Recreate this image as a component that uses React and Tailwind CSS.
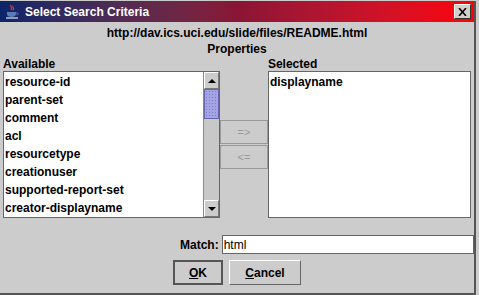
import React from "react";

const available = [
    "resource-id",
    "parent-set",
    "comment",
    "acl",
    "resourcetype",
    "creationuser",
    "supported-report-set",
    "creator-displayname",
];

const font = { fontFamily: '"Liberation Sans", Arial, sans-serif' };

const JavaCup = () => (
    <svg width="16" height="16" viewBox="0 0 16 16">
        <path d="M7 1c-1 2 2 3 0 5M9 2c-1 2 2 2 0 4" stroke="#e04020" strokeWidth="1.2" fill="none" />
        <path d="M3 8h9v2c0 2-2 3-4.5 3S3 12 3 10z" fill="#5a7ab8" />
        <path d="M12 9h1.5c1 0 1 2-1 2" stroke="#5a7ab8" strokeWidth="1" fill="none" />
        <path d="M2 14h12" stroke="#e8e8e8" strokeWidth="1.2" />
    </svg>
);

const ScrollBar = () => (
    <div className="flex w-[16px] flex-col border-l border-[#888] bg-[#c8c8c8]">
        <div className="flex h-[17px] items-center justify-center border border-t-white border-l-white border-r-[#777] border-b-[#777] bg-[#cccccc]">
            <div className="h-0 w-0 border-x-[4px] border-b-[4px] border-x-transparent border-b-black" />
        </div>
        <div className="h-[30px] border border-[#6666aa] bg-[#a4a4e4] bg-[radial-gradient(#7c7cc8_1px,transparent_1px)] bg-[length:3px_3px]" />
        <div className="flex-1" />
        <div className="flex h-[17px] items-center justify-center border border-t-white border-l-white border-r-[#777] border-b-[#777] bg-[#cccccc]">
            <div className="h-0 w-0 border-x-[4px] border-t-[4px] border-x-transparent border-t-black" />
        </div>
    </div>
);

export default function App() {
    return (
        <div className="h-[295px] w-[479px] overflow-hidden bg-[#cccccc] pt-[1px]" style={font}>
            <div className="flex h-[294px] w-[476px] flex-col border-r-2 border-b-2 border-r-[#555] border-b-[#555]">
                {/* Title bar */}
                <div className="flex h-[21px] items-center bg-gradient-to-r from-[#0a246a] via-[#8a1535] to-[#ff0000] pl-[4px] pr-[3px]">
                    <JavaCup />
                    <span className="ml-[5px] text-[12px] font-bold text-white">Select Search Criteria</span>
                    <div className="ml-auto flex h-[15px] w-[17px] items-center justify-center border border-t-white border-l-white border-r-[#333] border-b-[#333] bg-[#d4d0c8]">
                        <svg width="9" height="8" viewBox="0 0 9 8">
                            <path d="M1 0l7 8M8 0l-7 8" stroke="black" strokeWidth="1.6" />
                        </svg>
                    </div>
                </div>

                {/* Header */}
                <div className="mt-[3px] text-center text-[12px] font-bold leading-[16px] text-black">
                    http://dav.ics.uci.edu/slide/files/README.html
                </div>
                <div className="text-center text-[12px] font-bold leading-[16px] text-black">Properties</div>

                {/* Lists */}
                <div className="flex px-[3px]">
                    <div className="flex w-[218px] flex-col">
                        <div className="text-[12px] font-bold leading-[14px] text-black">Available</div>
                        <div className="flex h-[147px] border border-[#666] bg-white">
                            <div className="flex-1 pt-[1px]">
                                {available.map((item) => (
                                    <div key={item} className="h-[18px] pl-[1px] text-[12px] font-bold leading-[18px] text-black">
                                        {item}
                                    </div>
                                ))}
                            </div>
                            <ScrollBar />
                        </div>
                    </div>

                    <div className="flex w-[48px] flex-col pt-[63px]">
                        <button className="h-[24px] border border-[#999] bg-[#cccccc] text-[11px] text-[#999]">=&gt;</button>
                        <button className="mt-[1px] h-[24px] border border-[#999] bg-[#cccccc] text-[11px] text-[#999]">&lt;=</button>
                    </div>

                    <div className="flex w-[204px] flex-col">
                        <div className="text-[12px] font-bold leading-[14px] text-black">Selected</div>
                        <div className="h-[147px] border border-[#666] bg-white pt-[1px]">
                            <div className="h-[18px] pl-[1px] text-[12px] font-bold leading-[18px] text-black">displayname</div>
                        </div>
                    </div>
                </div>

                {/* Match */}
                <div className="mt-[17px] flex items-center pl-[180px]">
                    <span className="text-[12px] font-bold text-black">Match:</span>
                    <div className="ml-[3px] flex h-[19px] w-[253px] items-center border border-[#666] bg-white pl-[1px] text-[12px] text-black">
                        html
                    </div>
                </div>

                {/* Buttons */}
                <div className="mt-[6px] flex pl-[173px]">
                    <button className="h-[25px] w-[50px] border-2 border-[#555] bg-[#cccccc] text-[12px] font-bold text-black">
                        <span className="underline">O</span>K
                    </button>
                    <button className="ml-[6px] h-[25px] w-[72px] border border-t-white border-l-white border-r-[#666] border-b-[#666] bg-[#cccccc] text-[12px] font-bold text-black">
                        <span className="underline">C</span>ancel
                    </button>
                </div>
            </div>
        </div>
    );
}
